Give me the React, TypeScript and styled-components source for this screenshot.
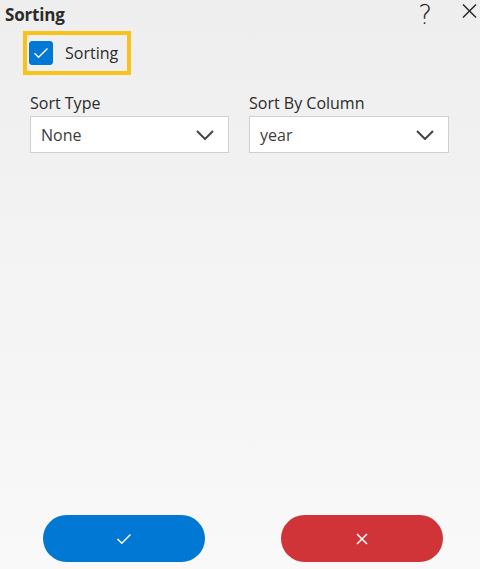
import React, { useState } from 'react'
import styled, { createGlobalStyle } from 'styled-components'

export default function App() {
  const [sorting, setSorting] = useState(true)

  return (
    <>
      <GlobalStyles />
      <Dialog>
        <Header>
          <Title>Sorting</Title>
          <HeaderActions>
            <HelpButton>?</HelpButton>
            <CloseButton aria-label='Close'>
              <svg width='15' height='14' viewBox='0 0 15 14'>
                <path d='M1 0.5L14 13.5M14 0.5L1 13.5' stroke='#222' strokeWidth='1.4' fill='none' />
              </svg>
            </CloseButton>
          </HeaderActions>
        </Header>

        <FocusBox>
          <CheckLabel onClick={() => setSorting(!sorting)}>
            <CheckBox $checked={sorting}>
              {sorting && (
                <svg width='16' height='12' viewBox='0 0 16 12'>
                  <path d='M1.5 6.2L5.6 10.2L14.5 1.5' stroke='#fff' strokeWidth='1.4' fill='none' />
                </svg>
              )}
            </CheckBox>
            <span>Sorting</span>
          </CheckLabel>
        </FocusBox>

        <Fields>
          <Field>
            <Label>Sort Type</Label>
            <Select>
              <span>None</span>
              <Chevron />
            </Select>
          </Field>
          <Field>
            <Label>Sort By Column</Label>
            <Select>
              <span>year</span>
              <Chevron />
            </Select>
          </Field>
        </Fields>

        <Footer>
          <ActionButton $variant='ok' aria-label='OK'>
            <svg width='16' height='12' viewBox='0 0 16 12'>
              <path d='M1.5 6L5.8 10.2L14.5 1.5' stroke='#fff' strokeWidth='1.5' fill='none' />
            </svg>
          </ActionButton>
          <ActionButton $variant='cancel' aria-label='Cancel'>
            <svg width='12' height='12' viewBox='0 0 12 12'>
              <path d='M1 1L11 11M11 1L1 11' stroke='#fff' strokeWidth='1.5' fill='none' />
            </svg>
          </ActionButton>
        </Footer>
      </Dialog>
    </>
  )
}

const Chevron = () => (
  <svg width='18' height='10' viewBox='0 0 18 10'>
    <path d='M1 1L9 9L17 1' stroke='#444' strokeWidth='2' fill='none' />
  </svg>
)

const GlobalStyles = createGlobalStyle`
  * {
    margin: 0;
    padding: 0;
    box-sizing: border-box;
  }
  html, body, #root {
    height: 100%;
  }
  body {
    font-family: 'Open Sans', 'Noto Sans', sans-serif;
    color: #333;
  }
  button {
    border: none;
    background: none;
    font: inherit;
    cursor: pointer;
  }
`
const Dialog = styled.div`
  height: 100vh;
  display: flex;
  flex-direction: column;
  background: linear-gradient(180deg, #eeeeee 0%, #f4f4f4 55%, #f9f9f9 100%);
`
const Header = styled.div`
  height: 31px;
  display: flex;
  justify-content: space-between;
  align-items: flex-start;
  padding: 0 3px 0 5px;
`
const Title = styled.h1`
  padding-top: 3px;
  font-size: 17px;
  font-weight: 700;
  line-height: 24px;
  color: #2b2b2b;
  letter-spacing: -0.2px;
`
const HeaderActions = styled.div`
  display: flex;
  align-items: flex-start;
  gap: 30px;
`
const HelpButton = styled.button`
  font-family: 'DejaVu Sans', sans-serif;
  font-weight: 200;
  font-size: 26px;
  line-height: 31px;
  color: #222;
`
const CloseButton = styled.button`
  display: flex;
  padding-top: 4px;
`
const FocusBox = styled.div`
  align-self: flex-start;
  margin-left: 23px;
  border: 4px solid #f9c21a;
  padding: 6px 9px 6px 2px;
`
const CheckLabel = styled.label`
  display: flex;
  align-items: center;
  gap: 12px;
  font-size: 16px;
  line-height: 24px;
  color: #2b2b2b;
  cursor: pointer;
`
const CheckBox = styled.span<{ $checked: boolean }>`
  width: 24px;
  height: 24px;
  border-radius: 3px;
  display: flex;
  align-items: center;
  justify-content: center;
  background: ${(p) => (p.$checked ? '#0078d4' : '#fff')};
  border: 1px solid ${(p) => (p.$checked ? '#0078d4' : '#888')};
`
const Fields = styled.div`
  display: grid;
  grid-template-columns: 199px 200px;
  column-gap: 20px;
  padding: 17px 0 0 30px;
`
const Field = styled.div`
  display: flex;
  flex-direction: column;
  gap: 2px;
`
const Label = styled.div`
  font-size: 16px;
  line-height: 22px;
  color: #2b2b2b;
`
const Select = styled.div`
  height: 37px;
  display: flex;
  align-items: center;
  justify-content: space-between;
  padding: 0 14px 0 10px;
  background: #fff;
  border: 1px solid #cfcfcf;
  font-size: 16px;
  color: #3c3c3c;
`
const Footer = styled.div`
  margin-top: auto;
  display: flex;
  gap: 76px;
  padding: 0 0 7px 43px;
`
const ActionButton = styled.button<{ $variant: 'ok' | 'cancel' }>`
  width: 162px;
  height: 47px;
  border-radius: 24px;
  display: flex;
  align-items: center;
  justify-content: center;
  background: ${(p) => (p.$variant === 'ok' ? '#0078d4' : '#d13438')};
`
